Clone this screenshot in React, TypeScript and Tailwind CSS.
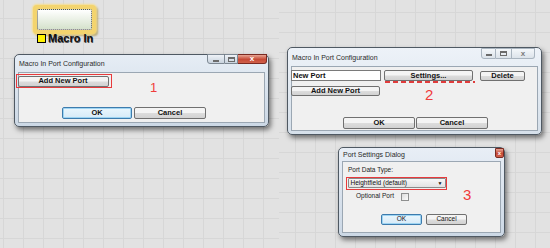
import React from 'react';

const gridBg =
  'bg-[#e2e2e2] bg-[linear-gradient(to_right,#d7d7d7_1px,transparent_1px),linear-gradient(to_bottom,#d7d7d7_1px,transparent_1px)] bg-[size:20px_20px]';

interface BtnProps {
  className?: string;
  def?: boolean;
  children: React.ReactNode;
}

// classic windows push button
const Btn: React.FC<BtnProps> = ({ className = 'font-bold text-[7.5px]', def, children }) => (
  <div
    className={`flex items-center justify-center rounded-[2px] border leading-none text-[#111] ${
      def
        ? 'border-[#3d7bad] bg-[linear-gradient(#eaf6fd,#d7eaf7)] shadow-[inset_0_0_0_1px_#9ed4f2]'
        : 'border-[#707070] bg-[linear-gradient(#f4f4f4_45%,#dcdcdc_55%,#d2d2d2)]'
    } ${className}`}
  >
    {children}
  </div>
);

interface WinProps {
  className: string;
  titleClass: string;
  title: string;
  controls: React.ReactNode;
  children: React.ReactNode;
}

const Win: React.FC<WinProps> = ({ className, titleClass, title, controls, children }) => (
  <div
    className={`absolute flex flex-col rounded-[5px] border border-[#4f5963] shadow-[2px_3px_5px_rgba(0,0,0,0.5)] ${className}`}
  >
    <div className={`relative flex items-center pl-[4px] text-[7px] leading-none text-[#2a2a2a] ${titleClass}`}>
      {title}
      {controls}
    </div>
    <div className="mx-[3px] mb-[3px] flex flex-1 flex-col border border-[#9ba7b3] bg-[#f0f0f0]">{children}</div>
  </div>
);

const MinGlyph = () => <div className="mt-[3px] h-[2px] w-[6px] bg-[#6b6b6b]" />;
const MaxGlyph = () => <div className="h-[5px] w-[7px] border border-t-2 border-[#6b6b6b]" />;

export default function App() {
  return (
    <div className="flex h-[248px] w-[550px] overflow-hidden font-['Liberation_Sans',Arial,sans-serif]">
      {/* left half */}
      <div className={`relative h-full w-[279px] shrink-0 ${gridBg} bg-[position:3px_18px]`}>
        {/* Macro In node */}
        <div className="absolute left-[33px] top-[5px] rounded-[4px] bg-[#f3d46e] p-[4px] shadow-[0_0_2px_1px_#f6de8c,2px_2px_2px_rgba(140,120,40,0.6)]">
          <div className="h-[21px] w-[55px] rounded-[2px] border border-dotted border-[#555] bg-[linear-gradient(#ffffff,#d5e2cc)]" />
        </div>
        <div className="absolute left-[37px] top-[33px] flex items-center gap-[2px]">
          <div className="h-[9px] w-[9px] border border-black bg-[#fff200]" />
          <span className="text-[11px] font-bold leading-none text-[#111] [text-shadow:0.5px_0.5px_0_#555]">Macro In</span>
        </div>

        {/* window 1 */}
        <Win
          className="left-[14px] top-[54px] h-[73px] w-[255px] bg-[linear-gradient(#e6edf5,#ccd8e5)]"
          titleClass="h-[17px]"
          title="Macro In Port Configuration"
          controls={
            <div className="absolute right-[1px] top-[-1px] flex h-[10px]">
              <div className="flex w-[18px] items-center justify-center rounded-bl-[3px] border border-[#7d8893] bg-[linear-gradient(#eef2f7,#c9d3de)]">
                <MinGlyph />
              </div>
              <div className="flex w-[13px] items-center justify-center border border-l-0 border-[#7d8893] bg-[linear-gradient(#eef2f7,#c9d3de)]">
                <MaxGlyph />
              </div>
              <div className="flex w-[29px] items-center justify-center rounded-br-[3px] border border-l-0 border-[#7a2a22] bg-[linear-gradient(#e8a493,#c74a36_55%,#d0604b)] text-[8px] font-bold leading-none text-white">
                x
              </div>
            </div>
          }
        >
          <div className="ml-[-3px] mt-[1px] w-[96px] border-[1.5px] border-[#e83a3c] py-[0.5px] pl-[0.5px] pr-[2px]">
            <Btn className="h-[11px] w-[91px] text-[7.5px] font-bold">Add New Port</Btn>
          </div>
          <div className="ml-[43px] mt-[19px] flex gap-[2px]">
            <Btn def className="h-[12px] w-[70px] text-[7.5px] font-bold">OK</Btn>
            <Btn className="h-[12px] w-[72px] text-[7.5px] font-bold">Cancel</Btn>
          </div>
        </Win>
        <span className="absolute left-[150px] top-[81px] text-[13px] leading-none text-[#f03c3c]">1</span>
      </div>

      {/* right half */}
      <div className={`relative h-full flex-1 ${gridBg} bg-[position:16px_12px]`}>
        {/* window 2 */}
        <Win
          className="left-[8px] top-[47px] h-[88px] w-[255px] bg-[linear-gradient(#edf2f8,#d6e0ea)]"
          titleClass="h-[18px]"
          title="Macro In Port Configuration"
          controls={
            <div className="absolute right-[6px] top-[0px] flex h-[11px]">
              <div className="flex w-[15px] items-center justify-center rounded-bl-[3px] border border-[#a9b4bf] bg-[linear-gradient(#f4f7fa,#dce3ea)]">
                <MinGlyph />
              </div>
              <div className="flex w-[16px] items-center justify-center border border-l-0 border-[#a9b4bf] bg-[linear-gradient(#f4f7fa,#dce3ea)]">
                <MaxGlyph />
              </div>
              <div className="flex w-[23px] items-center justify-center rounded-br-[3px] border border-l-0 border-[#a9b4bf] bg-[linear-gradient(#f4f7fa,#dce3ea)] text-[8px] font-bold leading-none text-[#7a7a7a]">
                x
              </div>
            </div>
          }
        >
          <div className="relative ml-[-1px] mt-[3px] flex items-center">
            <div className="flex h-[11px] w-[90px] items-center border border-[#7a7a7a] bg-white pl-[1px] text-[7.5px] font-bold leading-none text-[#111]">
              New Port
            </div>
            <Btn className="ml-[3px] h-[11px] w-[89px] text-[7.5px] font-bold">Settings...</Btn>
            <Btn className="ml-[7px] h-[10px] w-[45px] text-[7.5px] font-bold">Delete</Btn>
            <div className="absolute left-[94px] top-[11px] h-[2px] w-[90px] bg-[repeating-linear-gradient(to_right,#e03c3c_0_5px,transparent_5px_8px)]" />
          </div>
          <Btn className="ml-[-1px] mt-[5px] h-[10px] w-[89px] text-[7.5px] font-bold">Add New Port</Btn>
          <div className="ml-[51px] mt-[21px] flex gap-[1px]">
            <Btn className="h-[12px] w-[72px] text-[7.5px] font-bold">OK</Btn>
            <Btn className="h-[12px] w-[72px] text-[7.5px] font-bold">Cancel</Btn>
          </div>
        </Win>
        <span className="absolute left-[146px] top-[87px] text-[15px] leading-none text-[#f03c3c]">2</span>

        {/* window 3 */}
        <Win
          className="left-[59px] top-[147px] h-[90px] w-[167px] bg-[linear-gradient(#e8eef6,#ccd8e5)]"
          titleClass="h-[13px]"
          title="Port Settings Dialog"
          controls={
            <div className="absolute right-[0px] top-[0px] flex h-[10px] w-[9px] items-center justify-center rounded-b-[2px] border border-[#7a2a22] bg-[linear-gradient(#e8a493,#c74a36_55%,#d0604b)] text-[6px] font-bold leading-none text-white">
              x
            </div>
          }
        >
          <div className="ml-[5px] mt-[5px] text-[6.5px] leading-none text-[#222]">Port Data Type:</div>
          <div className="ml-[3px] mt-[3px] w-[101px] border-[1.5px] border-[#e83a3c] p-[0.5px]">
            <div className="flex h-[10px] items-center justify-between rounded-[1px] border border-[#8a8a8a] bg-[linear-gradient(#f7f7f7,#e2e2e2)] px-[2px] text-[6.5px] leading-none text-[#111]">
              <span>Heightfield (default)</span>
              <span className="text-[5px]">▼</span>
            </div>
          </div>
          <div className="ml-[13px] mt-[3px] flex items-center gap-[7px]">
            <span className="text-[6.5px] leading-none text-[#222]">Optional Port</span>
            <div className="h-[8px] w-[8px] border border-[#8e8f8f] bg-[linear-gradient(135deg,#dcdcdc,#fbfbfb)]" />
          </div>
          <div className="ml-[38px] mt-[13px] flex gap-[4px]">
            <Btn def className="h-[11px] w-[41px] text-[6.5px]">OK</Btn>
            <Btn className="h-[11px] w-[41px] text-[6.5px]">Cancel</Btn>
          </div>
        </Win>
        <span className="absolute left-[184px] top-[187px] text-[15px] leading-none text-[#f03c3c]">3</span>
      </div>
    </div>
  );
}
